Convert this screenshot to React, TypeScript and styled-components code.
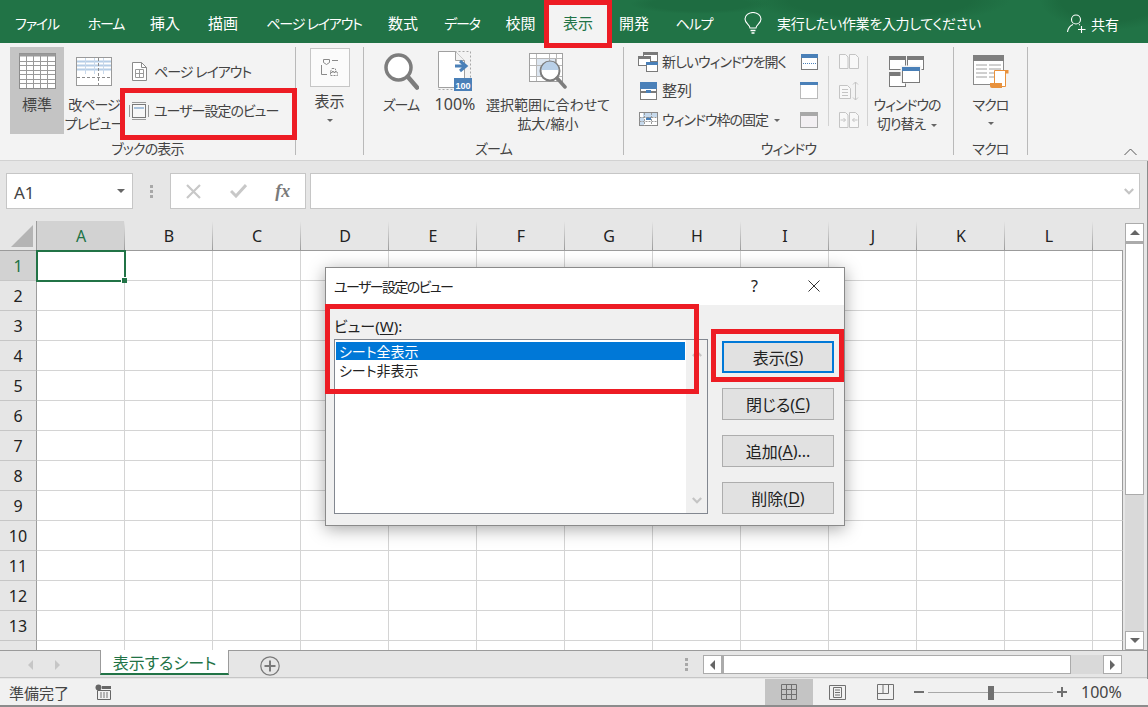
import React from 'react';
import styled, { createGlobalStyle } from 'styled-components';

const GlobalStyle = createGlobalStyle`
  html, body { margin: 0; padding: 0; background: #f3f3f3; }
  body {
    font-family: "Noto Sans", "Noto Sans CJK JP", sans-serif;
    font-feature-settings: "palt";
    color: #444;
  }
  * { box-sizing: border-box; }
`;

const RED = '#ed1c24';
const GREEN = '#217346';

const tabs = [
  { label: 'ファイル', w: 74, kana: true },
  { label: 'ホーム', w: 64, kana: true },
  { label: '挿入', w: 54 },
  { label: '描画', w: 62 },
  { label: 'ページ レイアウト', w: 120, kana: true },
  { label: '数式', w: 58 },
  { label: 'データ', w: 60, kana: true },
  { label: '校閲', w: 57 },
  { label: '表示', w: 58, active: true },
  { label: '開発', w: 54 },
  { label: 'ヘルプ', w: 66, kana: true },
];

const columns = ['A', 'B', 'C', 'D', 'E', 'F', 'G', 'H', 'I', 'J', 'K', 'L'];
const rows = Array.from({ length: 14 }, (_, i) => i + 1);

/* ---------- icons ---------- */

const NormalIcon = () => (
  <svg width="37" height="36" viewBox="0 0 37 36">
    <rect x="0.5" y="0.5" width="36" height="35" fill="#fff" stroke="#8c8c8c" />
    <rect x="0.5" y="0.5" width="36" height="3" fill="#9a9a9a" />
    {[7.5, 14.5, 21.5, 28.5].map((x) => (
      <line key={x} x1={x} x2={x} y1="1" y2="35" stroke="#9a9a9a" />
    ))}
    {[8.5, 12.5, 17.5, 21.5, 26.5, 30.5].map((y) => (
      <line key={y} x1="1" x2="36" y1={y} y2={y} stroke="#9a9a9a" />
    ))}
  </svg>
);

const PageBreakIcon = () => (
  <svg width="36" height="29" viewBox="0 0 36 29">
    <rect x="0.5" y="0.5" width="35" height="28" fill="#fff" stroke="#9a9a9a" />
    {[4.5, 8.5, 12.5].map((y) => (
      <line key={y} x1="1" x2="35" y1={y} y2={y} stroke="#b5cde6" strokeWidth="2" />
    ))}
    <line x1="1" x2="35" y1="20.5" y2="20.5" stroke="#8c8c8c" strokeDasharray="3 2" />
    {[9.5, 18.5, 27.5].map((x) => (
      <line key={x} x1={x} x2={x} y1="1" y2="17" stroke="#c8d8ea" />
    ))}
    <line x1="22.5" x2="22.5" y1="1" y2="28" stroke="#8c8c8c" strokeDasharray="3 2" />
  </svg>
);

const PageLayoutIcon = () => (
  <svg width="15" height="19" viewBox="0 0 15 19">
    <path d="M.5.5h9l5 5v13H.5z" fill="#fff" stroke="#8a8a8a" />
    <path d="M9.5.5v5h5" fill="none" stroke="#8a8a8a" />
    <path d="M3.5 7.5h8v8h-8zM7.5 7.5v8M3.5 11.5h8" fill="none" stroke="#9a9a9a" />
  </svg>
);

const CustomViewIcon = () => (
  <svg width="20" height="18" viewBox="0 0 20 18">
    <path d="M.5 3v12M19.5 3v12M3 .5h14M3 17.5h14" fill="none" stroke="#9a9a9a" />
    <rect x="3.5" y="2.5" width="13" height="13" fill="#f8f8f8" stroke="#7a7a7a" />
    <rect x="5" y="5" width="10" height="2" fill="#a9c2dc" />
  </svg>
);

const SheetViewIcon = () => (
  <svg width="18" height="18" viewBox="0 0 18 18" fill="none" stroke="#8a8a8a">
    <path d="M2.5.5h6v3l-3 2-3-2z" />
    <path d="M11 1.5h6" />
    <path d="M.5 6v9.5H6" />
    <path d="M11 9.5h3l1.5 3h-6zM9.5 13.5h7v3h-7z" strokeDasharray="2 1" />
  </svg>
);

const MagnifierIcon = () => (
  <svg width="35" height="37" viewBox="0 0 35 37">
    <circle cx="14.5" cy="14.5" r="12.5" fill="#fff" stroke="#7d7d7d" strokeWidth="3.5" />
    <line x1="24" y1="24" x2="33" y2="34.5" stroke="#7d7d7d" strokeWidth="4.5" strokeLinecap="round" />
  </svg>
);

const Zoom100Icon = () => (
  <svg width="34" height="40" viewBox="0 0 34 40">
    <path d="M.5.5h32v38H.5z" fill="none" stroke="#a8a8a8" strokeDasharray="2 2" />
    <path d="M.5.5h17l9 9v27H.5z" fill="#fff" stroke="#a0a0a0" />
    <path d="M17.5.5v9h9" fill="#f3f3f3" stroke="#a0a0a0" />
    <path d="M17 15h9M22 10l6 5-6 5" fill="none" stroke="#4a80b8" strokeWidth="3" />
    <rect x="16" y="27" width="18" height="13" fill="#4a80b8" />
    <Icon100Text x="25" y="37.5" textAnchor="middle">100</Icon100Text>
  </svg>
);

const FitIcon = () => (
  <svg width="38" height="36" viewBox="0 0 38 36">
    <rect x="0.5" y="0.5" width="33" height="28" fill="#fff" stroke="#a0a0a0" />
    <rect x="7.5" y="5.5" width="19" height="18" fill="#dce6f1" stroke="#a0a0a0" />
    {[7.5, 20.5, 27.5].map((x) => (
      <line key={x} x1={x} x2={x} y1="1" y2="28" stroke="#b8b8b8" />
    ))}
    {[5.5, 12.5, 23.5].map((y) => (
      <line key={y} x1="1" x2="33" y1={y} y2={y} stroke="#b8b8b8" />
    ))}
    <circle cx="21" cy="18" r="9.5" fill="#fff" stroke="#7d7d7d" strokeWidth="2" />
    <path d="M12.5 17a8.5 8.5 0 0 1 17 0z" fill="#b9d0e8" />
    <line x1="28" y1="25" x2="36" y2="34" stroke="#7d7d7d" strokeWidth="3.5" strokeLinecap="round" />
  </svg>
);

const NewWindowIcon = () => (
  <svg width="20" height="20" viewBox="0 0 20 20">
    <rect x="5.5" y="0.5" width="14" height="9" fill="#fff" stroke="#7a7a7a" />
    <rect x="5" y="0" width="15" height="3" fill="#7a7a7a" />
    <rect x="0.5" y="4.5" width="12" height="9" fill="#fff" stroke="#7a7a7a" />
    <rect x="0" y="4" width="13" height="3" fill="#7a7a7a" />
    <rect x="8.5" y="10.5" width="11" height="9" fill="#fff" stroke="#7a7a7a" />
    <rect x="8" y="10" width="12" height="3" fill="#4a80b8" />
  </svg>
);

const ArrangeIcon = () => (
  <svg width="17" height="18" viewBox="0 0 17 18">
    <rect x="0.5" y="0.5" width="16" height="17" fill="#fff" stroke="#7a7a7a" />
    <rect x="0" y="0" width="17" height="7" fill="#4a80b8" />
    <rect x="0" y="9" width="17" height="2" fill="#7a7a7a" />
    <rect x="6" y="8" width="5" height="3" fill="#4a80b8" />
  </svg>
);

const FreezeIcon = () => (
  <svg width="19" height="16" viewBox="0 0 19 16">
    <rect x="0.5" y="0.5" width="18" height="13" fill="#fff" stroke="#8a8a8a" />
    <rect x="4" y="1" width="14" height="4" fill="#c6d9ec" />
    <rect x="1" y="5" width="4" height="8" fill="#c6d9ec" />
    <rect x="7" y="5" width="5" height="3" fill="#4a80b8" />
    <path d="M.5 5.5h18M.5 9.5h18M5.5 1v13M12.5 1v13" stroke="#9a9a9a" strokeDasharray="2 1" fill="none" />
  </svg>
);

const SplitIcon = () => (
  <svg width="17" height="16" viewBox="0 0 17 16">
    <rect x="0.5" y="0.5" width="16" height="15" fill="#fff" stroke="#7a7a7a" />
    <rect x="0" y="0" width="17" height="4" fill="#4a80b8" />
    <line x1="2" x2="15" y1="9.5" y2="9.5" stroke="#4a80b8" strokeDasharray="1 1" />
  </svg>
);

const HideIcon = () => (
  <svg width="18" height="17" viewBox="0 0 18 17">
    <rect x="0.5" y="0.5" width="17" height="16" fill="#fff" stroke="#7a7a7a" strokeDasharray="1 1" />
    <rect x="0" y="0" width="18" height="3" fill="#4a80b8" />
  </svg>
);

const UnhideIcon = () => (
  <svg width="18" height="16" viewBox="0 0 18 16">
    <rect x="0.5" y="0.5" width="17" height="15" fill="#f3f0f3" stroke="#a8a8a8" />
    <rect x="0" y="0" width="18" height="4" fill="#a8a8a8" />
  </svg>
);

const SideBySideIcon = () => (
  <svg width="20" height="15" viewBox="0 0 20 15" fill="#f8f8f8" stroke="#c4c4c4">
    <path d="M.5.5h6l2.5 2.5v11.5H.5zM10.5.5h6l3 3v11h-9z" />
  </svg>
);

const SyncScrollIcon = () => (
  <svg width="20" height="20" viewBox="0 0 20 20" fill="none" stroke="#c4c4c4">
    <path d="M.5 4.5h8l3 3v10H.5z" fill="#f8f8f8" />
    <path d="M3 8.5h6M3 11.5h6M3 14.5h6" />
    <path d="M16.5 1v18M14 3.5l2.5-2.5 2.5 2.5M14 16.5l2.5 2.5 2.5-2.5" />
  </svg>
);

const ResetPosIcon = () => (
  <svg width="20" height="16" viewBox="0 0 20 16" fill="#f8f8f8" stroke="#c4c4c4">
    <path d="M.5.5h6l2.5 2.5v12.5H.5zM10.5.5h6l3 3v12h-9z" />
    <path d="M1.5 8h5M4.5 6l2 2-2 2M18.5 8h-5M15.5 6l-2 2 2 2" fill="none" />
  </svg>
);

const SwitchIcon = () => (
  <svg width="36" height="31" viewBox="0 0 36 31">
    <rect x="0.5" y="0.5" width="16" height="13" fill="#fff" stroke="#7a7a7a" />
    <rect x="0" y="0" width="17" height="4" fill="#7a7a7a" />
    <rect x="18.5" y="0.5" width="16" height="13" fill="#fff" stroke="#7a7a7a" />
    <rect x="18" y="0" width="17" height="4" fill="#7a7a7a" />
    <rect x="0.5" y="16.500" width="16" height="14" fill="#fff" stroke="#7a7a7a" />
    <rect x="0" y="16" width="17" height="4" fill="#7a7a7a" />
    <rect x="11.500" y="9.500" width="21" height="18" fill="#f3f3f3" />
    <rect x="13.500" y="11.500" width="17" height="15" fill="#fff" stroke="#7a7a7a" />
    <rect x="13" y="11" width="18" height="4" fill="#4a80b8" />
  </svg>
);

const MacroIcon = () => (
  <svg width="36" height="33" viewBox="0 0 36 33">
    <rect x="0.5" y="0.5" width="30" height="29" fill="#fff" stroke="#8a8a8a" />
    <rect x="0" y="0" width="31" height="6" fill="#7f7f7f" />
    <path d="M3 10h11M16 10h12M3 14h11M16 14h12M3 18h11M16 18h12M3 22h11M16 22h12" stroke="#a0a0a0" />
    <path d="M21.500 15.500h11v16h-11z" fill="#fff" stroke="#e8913c" />
    <path d="M17 28h12v5H19q-2 0-2-2z" fill="#e8913c" />
    <path d="M32 15h3.500v3.500H32z" fill="#e8913c" />
  </svg>
);

const BulbIcon = () => (
  <svg width="18" height="22" viewBox="0 0 18 22" fill="none" stroke="#fff" strokeWidth="1.1">
    <path d="M6 16c0-3-5-4.500-5-9a8 6.500 0 0 1 16 0c0 4.500-5 6-5 9z" />
    <path d="M6.500 18.500h5M7.500 21h3" strokeWidth="1.400" />
  </svg>
);

const ShareIcon = () => (
  <svg width="19" height="19" viewBox="0 0 19 19" fill="none" stroke="#fff" strokeWidth="1.1">
    <circle cx="9" cy="5.500" r="4.500" />
    <path d="M.5 18c.5-4 3-6.500 5.500-7.500M12 10.500l1 .5" />
    <path d="M14.500 12v7M11 15.500h7.500" />
  </svg>
);

const StatusMacroIcon = () => (
  <svg width="16" height="16" viewBox="0 0 16 16">
    <circle cx="3.500" cy="3.500" r="3" fill="#666" />
    <path d="M3 6.500h12.500v9H2.500v-9z" fill="none" stroke="#666" />
    <rect x="7" y="2" width="9" height="3" fill="#666" />
    <path d="M5 9h9M5 11h9M5 13h9" stroke="#777" strokeDasharray="2 1" />
  </svg>
);

const PlusCircleIcon = () => (
  <svg width="20" height="20" viewBox="0 0 20 20" fill="none" stroke="#7a7a7a">
    <circle cx="10" cy="10" r="9.200" strokeWidth="1.200" />
    <path d="M10 4.500v11M4.500 10h11" strokeWidth="2" />
  </svg>
);

const GridViewIcon = () => (
  <svg width="16" height="16" viewBox="0 0 16 16" fill="none" stroke="#707070">
    <path d="M.5.5h15v15H.5zM5.500.5v15M10.500.5v15M.5 5.500h15M.5 10.500h15" />
  </svg>
);

const PageViewIcon = () => (
  <svg width="17" height="15" viewBox="0 0 17 15" fill="none" stroke="#707070">
    <path d="M.5.5h16v14H.5zM4.500 2.500h8v10h-8zM6 5h5M6 7.500h5M6 10h5" />
  </svg>
);

const BreakViewIcon = () => (
  <svg width="17" height="16" viewBox="0 0 17 16" fill="none" stroke="#707070">
    <path d="M.5.500h16v15H.5zM.5 9.500h11v-9M6 .5v9" />
  </svg>
);

const CrossIcon = () => (
  <svg width="15" height="15" viewBox="0 0 15 15" stroke="#c8c8c8" strokeWidth="2.200">
    <path d="M1 1l13 13M14 1L1 14" />
  </svg>
);

const CheckIcon = () => (
  <svg width="17" height="14" viewBox="0 0 17 14" fill="none" stroke="#c8c8c8" strokeWidth="3">
    <path d="M1 7l5 5L16 1" />
  </svg>
);

const ChevronDownIcon = () => (
  <svg width="10" height="7" viewBox="0 0 10 7" fill="none" stroke="#c4c4c4" strokeWidth="2.200">
    <path d="M.8 1l4.200 4.200L9.200 1" />
  </svg>
);

const ChevronUpIcon = () => (
  <svg width="13" height="8" viewBox="0 0 13 8" fill="none" stroke="#555" strokeWidth="1">
    <path d="M.5 7l6-6 6 6" />
  </svg>
);

const ListUpIcon = () => (
  <svg width="10" height="7" viewBox="0 0 10 7" fill="none" stroke="#c4c4c4" strokeWidth="2.200">
    <path d="M.8 6l4.200-4.200L9.200 6" />
  </svg>
);

const CloseIcon = () => (
  <svg width="12" height="12" viewBox="0 0 12 12" stroke="#333" strokeWidth="1">
    <path d="M.5.5l11 11M11.500.5l-11 11" />
  </svg>
);

/* ---------- layout ---------- */

const Window = styled.div`
  position: relative;
  width: 1148px;
  height: 707px;
  overflow: hidden;
  display: flex;
  flex-direction: column;
  background: #e6e6e6;
`;

const TitleBar = styled.header`
  height: 43px;
  flex: none;
  display: flex;
  align-items: flex-end;
  background:
    radial-gradient(ellipse 130px 24px at 880px 0, #1d6a3f 70%, transparent 100%),
    radial-gradient(ellipse 70px 30px at 1110px 0, #1d6a3f 70%, transparent 100%),
    radial-gradient(ellipse 70px 10px at 700px 4px, #1e6c41 70%, transparent 100%),
    ${GREEN};
`;

const Tab = styled.div<{ $w: number; $active?: boolean; $kana?: boolean }>`
  width: ${(p) => p.$w}px;
  height: 39px;
  flex: none;
  display: flex;
  align-items: center;
  justify-content: center;
  padding-bottom: 2px;
  font-size: ${(p) => (p.$kana ? 14 : 15)}px;
  letter-spacing: ${(p) => (p.$kana ? '-1.2px' : '0')};
  white-space: nowrap;
  color: ${(p) => (p.$active ? GREEN : '#fff')};
  background: ${(p) => (p.$active ? '#f3f3f3' : 'transparent')};
`;

const TellMe = styled.div`
  height: 39px;
  display: flex;
  align-items: center;
  margin-left: 17px;
  gap: 15px;
  color: #fff;
  font-size: 14px;
  letter-spacing: -0.3px;
  white-space: nowrap;
  padding-bottom: 2px;
`;

const Share = styled.div`
  height: 39px;
  margin-left: auto;
  margin-right: 29px;
  display: flex;
  align-items: center;
  gap: 5px;
  color: #fff;
  font-size: 14px;
`;

const Ribbon = styled.section`
  height: 118px;
  flex: none;
  display: flex;
  align-items: flex-start;
  padding-top: 4px;
  background: #f3f3f3;
  border-bottom: 1px solid #d2d2d2;
`;

const Group = styled.div<{ $w: number }>`
  width: ${(p) => p.$w}px;
  height: 108px;
  flex: none;
  display: flex;
  flex-direction: column;
  border-right: 1px solid #b9b9b9;
`;

const GroupBody = styled.div<{ $pad?: number; $justify?: string }>`
  height: 92px;
  display: flex;
  align-items: flex-start;
  padding-left: ${(p) => p.$pad ?? 0}px;
  justify-content: ${(p) => p.$justify ?? 'flex-start'};
`;

const GroupLabel = styled.div`
  height: 16px;
  line-height: 20px;
  text-align: center;
  font-size: 14px;
  letter-spacing: -0.8px;
  white-space: nowrap;
`;

const BigButton = styled.div<{ $w: number; $on?: boolean; $gap?: number }>`
  width: ${(p) => p.$w}px;
  height: 87px;
  flex: none;
  margin-left: ${(p) => p.$gap ?? 0}px;
  display: flex;
  flex-direction: column;
  align-items: center;
  background: ${(p) => (p.$on ? '#c4c4c4' : 'transparent')};
`;

const IconSlot = styled.div`
  height: 48px;
  flex: none;
  display: flex;
  align-items: center;
  justify-content: center;
`;

const BigLabel = styled.div`
  font-size: 14px;
  line-height: 19px;
  text-align: center;
  white-space: nowrap;
`;

/* kana runs are narrower than the kanji ones in the reference font */
const Tight = styled.span`
  letter-spacing: -1px;
`;

const Wide = styled.span`
  font-size: 15px;
`;

const LatinValue = styled.span`
  font-size: 16px;
`;

const Caret = styled.span`
  display: inline-block;
  width: 0;
  height: 0;
  border-left: 3.500px solid transparent;
  border-right: 3.500px solid transparent;
  border-top: 3.500px solid #666;
`;

const CaretLine = styled.div`
  height: 19px;
  display: flex;
  align-items: center;
  justify-content: center;
`;

const InlineCaret = styled(Caret)`
  margin-left: 6px;
  vertical-align: middle;
`;

const SmallColumn = styled.div<{ $top: number; $w: number }>`
  width: ${(p) => p.$w}px;
  flex: none;
  padding-top: ${(p) => p.$top}px;
  display: flex;
  flex-direction: column;
`;

const SmallRow = styled.div<{ $h: number; $slot: number }>`
  height: ${(p) => p.$h}px;
  display: grid;
  grid-template-columns: ${(p) => p.$slot}px 1fr;
  align-items: center;
  justify-items: start;
  font-size: 14px;
  white-space: nowrap;
  > svg {
    justify-self: center;
  }
  > span {
    margin-top: -2px;
  }
`;

const ViewPicker = styled.div`
  width: 40px;
  height: 39px;
  margin: 1px 0 5px;
  display: flex;
  align-items: center;
  justify-content: center;
  background: #fbfbfb;
  border: 1px solid #c6c6c6;
`;

const PickerColumn = styled.div`
  display: flex;
  flex-direction: column;
  align-items: center;
`;

const IconColumn = styled.div<{ $left: number; $w: number }>`
  width: ${(p) => p.$w}px;
  margin-left: ${(p) => p.$left}px;
  flex: none;
  display: flex;
  flex-direction: column;
  align-items: center;
`;

const IconCell = styled.div`
  height: 29px;
  display: flex;
  align-items: center;
`;

const VerticalRule = styled.div<{ $left: number }>`
  width: 1px;
  height: 70px;
  flex: none;
  margin: 9px 0 0 ${(p) => p.$left}px;
  background: #d2d2d2;
`;

const CollapseSlot = styled.div`
  margin-left: auto;
  align-self: flex-end;
  padding: 0 11px 4px 0;
  display: flex;
`;

const WorkArea = styled.div`
  flex: 1;
  min-height: 0;
  display: flex;
  flex-direction: column;
  border-right: 1px solid #8c8c8c;
`;

const FormulaBar = styled.div`
  height: 60px;
  flex: none;
  display: flex;
  padding-top: 12px;
  padding-left: 6px;
`;

const FieldBox = styled.div<{ $w: number }>`
  width: ${(p) => p.$w}px;
  height: 36px;
  flex: none;
  display: flex;
  align-items: center;
  background: #fff;
  border: 1px solid #c6c6c6;
`;

const NameBox = styled(FieldBox)`
  justify-content: space-between;
  padding: 2px 7px 0 7px;
  font-size: 17px;
  color: #444;
`;

const NameCaret = styled(Caret)`
  border-left-width: 4px;
  border-right-width: 4px;
  border-top-width: 4px;
  margin-bottom: 3px;
`;

const GripSlot = styled.div`
  width: 37px;
  height: 36px;
  flex: none;
  display: flex;
  align-items: center;
  justify-content: center;
`;

const Grip = styled.div`
  width: 3px;
  height: 13px;
  background: repeating-linear-gradient(#a8a8a8 0 3px, transparent 3px 5px);
`;

const FxBox = styled(FieldBox)`
  justify-content: space-around;
`;

const FxSlot = styled.div`
  width: 45px;
  display: flex;
  justify-content: center;
`;

const FxMark = styled.span`
  font-family: "Liberation Serif", serif;
  font-style: italic;
  font-weight: 700;
  font-size: 18px;
  color: #7a7a7a;
`;

const InputBox = styled(FieldBox)`
  margin-left: 4px;
  justify-content: flex-end;
  padding-right: 5px;
`;

const SheetArea = styled.div`
  height: 429px;
  flex: none;
  display: flex;
`;

const Cells = styled.div`
  width: 1123px;
  height: 429px;
  flex: none;
  overflow: hidden;
  display: grid;
  grid-template-columns: 37px repeat(12, 88px) 30px;
  grid-auto-rows: 30px;
  background: #fff;
`;

const Corner = styled.div`
  background: #e6e6e6;
  border-bottom: 1px solid #9b9b9b;
  border-right: 1px solid #9b9b9b;
  display: flex;
  align-items: flex-end;
  justify-content: flex-end;
  padding: 0 3px 3px 0;
`;

const CornerMark = styled.div`
  width: 0;
  height: 0;
  border-left: 22px solid transparent;
  border-bottom: 22px solid #b4b4b4;
`;

const ColHead = styled.div<{ $on?: boolean }>`
  display: flex;
  align-items: center;
  justify-content: center;
  font-size: 16px;
  color: ${(p) => (p.$on ? GREEN : '#222')};
  background:
    linear-gradient(#e6e6e6, #9b9b9b) right / 1px 100% no-repeat,
    ${(p) => (p.$on ? '#d2d2d2' : '#e6e6e6')};
  border-bottom: 1px solid #9b9b9b;
`;

const ColHeadEnd = styled.div`
  background: #e6e6e6;
  border-bottom: 1px solid #9b9b9b;
`;

const RowHead = styled.div<{ $on?: boolean }>`
  display: flex;
  align-items: center;
  justify-content: center;
  font-size: 16px;
  color: ${(p) => (p.$on ? GREEN : '#222')};
  background: ${(p) => (p.$on ? '#d2d2d2' : '#e6e6e6')};
  border-right: 1px solid #9b9b9b;
  border-bottom: 1px solid #c6c6c6;
`;

const Cell = styled.div<{ $last?: boolean }>`
  border-right: 1px solid ${(p) => (p.$last ? '#9b9b9b' : '#d4d4d4')};
  border-bottom: 1px solid #d4d4d4;
`;

const ActiveCell = styled(Cell)`
  position: relative;
  outline: 2px solid ${GREEN};
  outline-offset: -1px;
  z-index: 1;
`;

const FillHandle = styled.span`
  position: absolute;
  right: -3px;
  bottom: -3px;
  width: 6px;
  height: 6px;
  background: ${GREEN};
  border: 1px solid #fff;
  border-width: 1px 0 0 1px;
`;

const VScroll = styled.div`
  flex: 1;
  padding: 2px 3px 0 2px;
  display: flex;
  flex-direction: column;
`;

const ScrollButton = styled.div`
  width: 19px;
  height: 19px;
  flex: none;
  display: flex;
  align-items: center;
  justify-content: center;
  background: #fff;
  border: 1px solid #ababab;
`;

const VThumb = styled.div`
  height: 253px;
  flex: none;
  background: #fff;
  border: 1px solid #ababab;
  border-top-width: 2px;
`;

const VTrack = styled.div`
  flex: 1;
  width: 19px;
  background: #d9d9d9;
`;

const Arrow = styled.span<{ $dir: 'up' | 'down' | 'left' | 'right'; $color?: string; $size?: number }>`
  display: block;
  width: 0;
  height: 0;
  ${({ $dir, $color = '#666', $size = 5 }) => {
    const side = `${$size}px solid transparent`;
    const fill = `${$size}px solid ${$color}`;
    if ($dir === 'up') return `border-left:${side};border-right:${side};border-bottom:${fill};`;
    if ($dir === 'down') return `border-left:${side};border-right:${side};border-top:${fill};`;
    if ($dir === 'left') return `border-top:${side};border-bottom:${side};border-right:${fill};`;
    return `border-top:${side};border-bottom:${side};border-left:${fill};`;
  }}
`;

const SheetTabs = styled.div`
  height: 28px;
  flex: none;
  display: flex;
  align-items: flex-start;
  border-top: 1px solid #9b9b9b;
  border-bottom: 1px solid #c6c6c6;
`;

const TabNav = styled.div`
  width: 100px;
  height: 27px;
  flex: none;
  display: flex;
  align-items: center;
  gap: 22px;
  padding-left: 28px;
`;

const SheetTab = styled.div`
  width: 129px;
  height: 25px;
  flex: none;
  margin-top: -1px;
  display: flex;
  align-items: center;
  justify-content: center;
  font-size: 16px;
  color: ${GREEN};
  background: #fff;
  border-left: 1px solid #9b9b9b;
  border-right: 1px solid #9b9b9b;
  border-bottom: 2px solid ${GREEN};
`;

const AddSheet = styled.div`
  margin: 5px 0 0 31px;
  display: flex;
`;

const HScrollWrap = styled.div`
  margin-left: auto;
  margin-right: 25px;
  height: 27px;
  display: flex;
  align-items: center;
`;

const HGrip = styled(Grip)`
  margin-right: 15px;
`;

const HThumb = styled.div`
  width: 349px;
  height: 19px;
  background: #fff;
  border: 1px solid #ababab;
  border-left-width: 2px;
`;

const HTrack = styled.div`
  width: 32px;
  height: 19px;
  background: #d9d9d9;
`;

const StatusBar = styled.footer`
  height: 28px;
  flex: none;
  display: flex;
  align-items: stretch;
  padding-left: 9px;
  background: #f1f1f1;
  border-bottom: 2px solid #8c8c8c;
  font-size: 15px;
`;

const StatusText = styled.div`
  width: 86px;
  flex: none;
  display: flex;
  align-items: center;
  white-space: nowrap;
`;

const StatusIcon = styled.div`
  display: flex;
  align-items: center;
`;

const ViewMode = styled.div<{ $on?: boolean; $first?: boolean }>`
  width: 48px;
  flex: none;
  margin-left: ${(p) => (p.$first ? 'auto' : '0')};
  display: flex;
  align-items: center;
  justify-content: center;
  background: ${(p) => (p.$on ? '#c4c4c4' : 'transparent')};
`;

const ZoomGlyph = styled.div`
  width: 10px;
  margin-left: 5px;
  display: flex;
  align-items: center;
`;

const MinusBar = styled.div`
  width: 10px;
  height: 2px;
  background: #707070;
`;

const PlusBar = styled.div`
  width: 10px;
  height: 10px;
  background:
    linear-gradient(#707070, #707070) center / 100% 2px no-repeat,
    linear-gradient(#707070, #707070) center / 2px 100% no-repeat;
`;

const ZoomSlider = styled.div`
  position: relative;
  width: 125px;
  margin-left: 4px;
  flex: none;
  display: flex;
  align-items: center;
  &::before {
    content: '';
    width: 100%;
    height: 1px;
    background: #a8a8a8;
  }
`;

const SliderThumb = styled.span`
  position: absolute;
  left: 60px;
  top: 7px;
  width: 6px;
  height: 14px;
  background: #707070;
`;

const PlusGlyph = styled(ZoomGlyph)`
  margin-left: 4px;
`;

const ZoomValue = styled.div`
  width: 42px;
  margin: 0 25px 0 14px;
  flex: none;
  display: flex;
  align-items: center;
  font-size: 16px;
  white-space: nowrap;
`;

/* ---------- dialog ---------- */

const Dialog = styled.div`
  position: absolute;
  left: 325px;
  top: 267px;
  width: 520px;
  height: 259px;
  z-index: 5;
  display: flex;
  flex-direction: column;
  background: #f0f0f0;
  border: 1px solid #8a8a8a;
  box-shadow: 0 3px 16px rgba(0, 0, 0, 0.35);
  color: #222;
  font-size: 14px;
`;

const DialogTitle = styled.div`
  height: 37px;
  flex: none;
  display: flex;
  align-items: center;
  padding-left: 8px;
  padding-bottom: 2px;
  background: #fff;
`;

const TitleText = styled.div`
  flex: 1;
  letter-spacing: -1.600px;
`;

const TitleButton = styled.div<{ $right: number }>`
  margin-right: ${(p) => p.$right}px;
  display: flex;
  font-size: 16px;
`;

const DialogBody = styled.div`
  flex: 1;
  display: flex;
  padding-left: 8px;
`;

const ListColumn = styled.div`
  width: 374px;
  flex: none;
`;

const ListLabel = styled.div`
  height: 20px;
  margin-top: 11px;
  line-height: 20px;
  font-size: 15px;
`;

const ListBox = styled.div`
  height: 175px;
  margin-top: 3px;
  display: flex;
  background: #fff;
  border: 1px solid #828790;
`;

const ListRows = styled.div`
  flex: 1;
  padding: 2px 1px;
`;

const ListRow = styled.div<{ $on?: boolean }>`
  height: 18px;
  margin-bottom: 1px;
  display: flex;
  align-items: center;
  padding-left: 3px;
  color: ${(p) => (p.$on ? '#fff' : '#222')};
  background: ${(p) => (p.$on ? '#0078d7' : 'transparent')};
`;

const ListScroll = styled.div`
  width: 21px;
  flex: none;
  display: flex;
  flex-direction: column;
  justify-content: space-between;
  align-items: center;
  padding: 10px 0 9px;
  background: #f0f0f0;
`;

const ActionColumn = styled.div`
  width: 112px;
  margin-left: 14px;
  padding-top: 36px;
  flex: none;
  display: flex;
  flex-direction: column;
  gap: 15px;
`;

const ActionButton = styled.div<{ $primary?: boolean }>`
  height: 32px;
  display: flex;
  align-items: center;
  justify-content: center;
  font-size: 16px;
  padding-bottom: 1px;
  background: #e1e1e1;
  border: ${(p) => (p.$primary ? '2px solid #0078d7' : '1px solid #adadad')};
`;

const Key = styled.span`
  text-decoration: underline;
  text-underline-offset: 2px;
`;

const RedFrame = styled.div<{ $x: number; $y: number; $w: number; $h: number }>`
  position: absolute;
  left: ${(p) => p.$x}px;
  top: ${(p) => p.$y}px;
  width: ${(p) => p.$w}px;
  height: ${(p) => p.$h}px;
  border: 5px solid ${RED};
  pointer-events: none;
  z-index: 6;
`;

const Icon100Text = styled.text`
  font-family: "Liberation Sans", sans-serif;
  font-size: 9px;
  font-weight: 700;
  fill: #fff;
`;

const App = () => (
  <Window>
    <GlobalStyle />

    <TitleBar>
      {tabs.map((t) => (
        <Tab key={t.label} $w={t.w} $active={t.active} $kana={t.kana}>
          {t.label}
        </Tab>
      ))}
      <TellMe>
        <BulbIcon />
        <span>実行したい作業を入力してください</span>
      </TellMe>
      <Share>
        <ShareIcon />
        共有
      </Share>
    </TitleBar>

    <Ribbon>
      <Group $w={296}>
        <GroupBody $pad={10}>
          <BigButton $w={54} $on>
            <IconSlot><NormalIcon /></IconSlot>
            <BigLabel><Wide>標準</Wide></BigLabel>
          </BigButton>
          <BigButton $w={60}>
            <IconSlot><PageBreakIcon /></IconSlot>
            <BigLabel><Tight>改ページ<br />プレビュー</Tight></BigLabel>
          </BigButton>
          <SmallColumn $top={5} $w={170}>
            <SmallRow $h={39} $slot={30}>
              <PageLayoutIcon />
              <Tight>ページ レイアウト</Tight>
            </SmallRow>
            <SmallRow $h={39} $slot={30}>
              <CustomViewIcon />
              <Tight>ユーザー設定のビュー</Tight>
            </SmallRow>
          </SmallColumn>
        </GroupBody>
        <GroupLabel>ブックの表示</GroupLabel>
      </Group>

      <Group $w={68}>
        <GroupBody $justify="center">
          <PickerColumn>
            <ViewPicker><SheetViewIcon /></ViewPicker>
            <BigLabel><Wide>表示</Wide></BigLabel>
            <CaretLine><Caret /></CaretLine>
          </PickerColumn>
        </GroupBody>
      </Group>

      <Group $w={260}>
        <GroupBody $pad={14}>
          <BigButton $w={46}>
            <IconSlot><MagnifierIcon /></IconSlot>
            <BigLabel><Tight>ズーム</Tight></BigLabel>
          </BigButton>
          <BigButton $w={46} $gap={8}>
            <IconSlot><Zoom100Icon /></IconSlot>
            <BigLabel><LatinValue>100%</LatinValue></BigLabel>
          </BigButton>
          <BigButton $w={128} $gap={6}>
            <IconSlot><FitIcon /></IconSlot>
            <BigLabel>選択範囲に合わせて<br />拡大/縮小</BigLabel>
          </BigButton>
        </GroupBody>
        <GroupLabel>ズーム</GroupLabel>
      </Group>

      <Group $w={330}>
        <GroupBody $pad={10}>
          <SmallColumn $top={0} $w={166}>
            <SmallRow $h={29} $slot={28}>
              <NewWindowIcon />
              <Tight>新しいウィンドウを開く</Tight>
            </SmallRow>
            <SmallRow $h={29} $slot={28}>
              <ArrangeIcon />
              <Wide>整列</Wide>
            </SmallRow>
            <SmallRow $h={29} $slot={28}>
              <FreezeIcon />
              <Tight>ウィンドウ枠の固定<InlineCaret /></Tight>
            </SmallRow>
          </SmallColumn>
          <IconColumn $left={0} $w={18}>
            <IconCell><SplitIcon /></IconCell>
            <IconCell><HideIcon /></IconCell>
            <IconCell><UnhideIcon /></IconCell>
          </IconColumn>
          <VerticalRule $left={10} />
          <IconColumn $left={9} $w={21}>
            <IconCell><SideBySideIcon /></IconCell>
            <IconCell><SyncScrollIcon /></IconCell>
            <IconCell><ResetPosIcon /></IconCell>
          </IconColumn>
          <VerticalRule $left={8} />
          <BigButton $w={78}>
            <IconSlot><SwitchIcon /></IconSlot>
            <BigLabel><Tight>ウィンドウの<br />切り替え<InlineCaret /></Tight></BigLabel>
          </BigButton>
        </GroupBody>
        <GroupLabel>ウィンドウ</GroupLabel>
      </Group>

      <Group $w={74}>
        <GroupBody>
          <BigButton $w={73}>
            <IconSlot><MacroIcon /></IconSlot>
            <BigLabel><Tight>マクロ</Tight></BigLabel>
            <CaretLine><Caret /></CaretLine>
          </BigButton>
        </GroupBody>
        <GroupLabel>マクロ</GroupLabel>
      </Group>

      <CollapseSlot><ChevronUpIcon /></CollapseSlot>
    </Ribbon>

    <WorkArea>
      <FormulaBar>
        <NameBox $w={127}>
          A1
          <NameCaret />
        </NameBox>
        <GripSlot><Grip /></GripSlot>
        <FxBox $w={136}>
          <FxSlot><CrossIcon /></FxSlot>
          <FxSlot><CheckIcon /></FxSlot>
          <FxSlot><FxMark>fx</FxMark></FxSlot>
        </FxBox>
        <InputBox $w={830}><ChevronDownIcon /></InputBox>
      </FormulaBar>

      <SheetArea>
        <Cells>
          <Corner><CornerMark /></Corner>
          {columns.map((c) => (
            <ColHead key={c} $on={c === 'A'}>{c}</ColHead>
          ))}
          <ColHeadEnd />
          {rows.map((r) => (
            <React.Fragment key={r}>
              <RowHead $on={r === 1}>{r}</RowHead>
              {columns.map((c) =>
                r === 1 && c === 'A' ? (
                  <ActiveCell key={c}><FillHandle /></ActiveCell>
                ) : (
                  <Cell key={c} />
                ),
              )}
              <Cell $last />
            </React.Fragment>
          ))}
        </Cells>
        <VScroll>
          <ScrollButton><Arrow $dir="up" /></ScrollButton>
          <VThumb />
          <VTrack />
          <ScrollButton><Arrow $dir="down" /></ScrollButton>
        </VScroll>
      </SheetArea>

      <SheetTabs>
        <TabNav>
          <Arrow $dir="left" $color="#c6c6c6" />
          <Arrow $dir="right" $color="#c6c6c6" />
        </TabNav>
        <SheetTab>表示するシート</SheetTab>
        <AddSheet><PlusCircleIcon /></AddSheet>
        <HScrollWrap>
          <HGrip />
          <ScrollButton><Arrow $dir="left" /></ScrollButton>
          <HThumb />
          <HTrack />
          <ScrollButton><Arrow $dir="right" /></ScrollButton>
        </HScrollWrap>
      </SheetTabs>
    </WorkArea>

    <StatusBar>
      <StatusText>準備完了</StatusText>
      <StatusIcon><StatusMacroIcon /></StatusIcon>
      <ViewMode $on $first><GridViewIcon /></ViewMode>
      <ViewMode><PageViewIcon /></ViewMode>
      <ViewMode><BreakViewIcon /></ViewMode>
      <ZoomGlyph><MinusBar /></ZoomGlyph>
      <ZoomSlider><SliderThumb /></ZoomSlider>
      <PlusGlyph><PlusBar /></PlusGlyph>
      <ZoomValue>100%</ZoomValue>
    </StatusBar>

    <RedFrame $x={544} $y={0} $w={68} $h={48} />
    <RedFrame $x={120} $y={88} $w={177} $h={52} />

    <Dialog>
      <DialogTitle>
        <TitleText>ユーザー設定のビュー</TitleText>
        <TitleButton $right={50}>?</TitleButton>
        <TitleButton $right={24}><CloseIcon /></TitleButton>
      </DialogTitle>
      <DialogBody>
        <ListColumn>
          <ListLabel>ビュー(<Key>W</Key>):</ListLabel>
          <ListBox>
            <ListRows>
              <ListRow $on>シート全表示</ListRow>
              <ListRow>シート非表示</ListRow>
            </ListRows>
            <ListScroll>
              <ListUpIcon />
              <ChevronDownIcon />
            </ListScroll>
          </ListBox>
        </ListColumn>
        <ActionColumn>
          <ActionButton $primary>表示(<Key>S</Key>)</ActionButton>
          <ActionButton>閉じる(<Key>C</Key>)</ActionButton>
          <ActionButton>追加(<Key>A</Key>)...</ActionButton>
          <ActionButton>削除(<Key>D</Key>)</ActionButton>
        </ActionColumn>
      </DialogBody>
      <RedFrame $x={-1} $y={36} $w={374} $h={90} />
      <RedFrame $x={385} $y={61} $w={133} $h={53} />
    </Dialog>
  </Window>
);

export default App;
